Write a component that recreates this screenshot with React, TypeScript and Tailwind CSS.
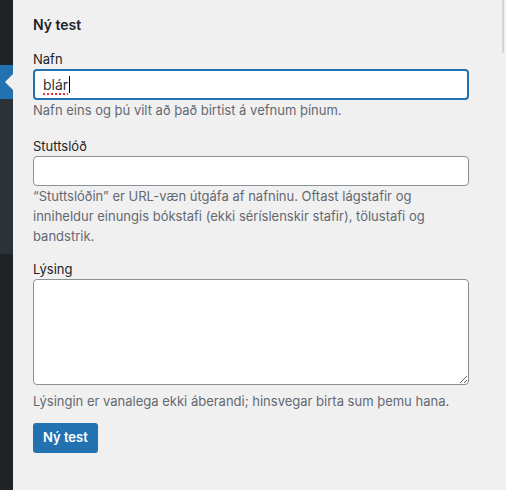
const FONT = "font-['Inter','Liberation_Sans',Arial,sans-serif]";

function Label({ children }: { children: React.ReactNode }) {
    return <div className="mb-px text-[13px] leading-[18px] text-[#1d2327]">{children}</div>;
}

function Help({ children, className = "" }: { children: React.ReactNode; className?: string }) {
    return <p className={`text-[13px] leading-[20px] text-[#646970] ${className}`}>{children}</p>;
}

export default function App() {
    return (
        <div className={`relative flex h-[490px] w-[506px] overflow-hidden bg-[#f0f0f1] ${FONT}`}>
            {/* admin menu strip */}
            <div className="flex w-[13px] flex-col">
                <div className="h-[65px] bg-[#1d2327]" />
                <div className="relative h-[34px] bg-[#2271b1]">
                    <div className="absolute right-0 top-[9px] h-0 w-0 border-y-[8px] border-r-[8px] border-y-transparent border-r-[#f0f0f1]" />
                </div>
                <div className="h-[155px] bg-[#2c3338]" />
                <div className="flex-1 bg-[#1d2327]" />
            </div>

            <form className="w-[436px] pl-[20px] pt-[15px] box-content" onSubmit={(e) => e.preventDefault()}>
                <h2 className="text-[14px] font-semibold leading-[20px] text-[#1d2327]">Ný test</h2>

                <div className="mt-[15px]">
                    <Label>Nafn</Label>
                    <div className="flex h-[31px] w-[436px] items-center rounded-[4px] border-2 border-[#2271b1] bg-white px-[8px] text-[14px] text-[#2c3338]">
                        <span className="underline decoration-red-500 decoration-dotted decoration-2 underline-offset-[3px]">blár</span>
                        <span className="ml-px h-[17px] w-px bg-black" />
                    </div>
                    <Help>Nafn eins og þú vilt að það birtist á vefnum þínum.</Help>
                </div>

                <div className="mt-[17px]">
                    <Label>Stuttslóð</Label>
                    <input
                        type="text"
                        className="block h-[30px] w-[436px] rounded-[4px] border border-[#8c8f94] bg-white px-[8px] text-[14px] outline-none"
                    />
                    <Help>
                        “Stuttslóðin” er URL-væn útgáfa af nafninu. Oftast lágstafir og inniheldur einungis bókstafi
                        (ekki séríslenskir stafir), tölustafi og bandstrik.
                    </Help>
                </div>

                <div className="mt-[14px]">
                    <Label>Lýsing</Label>
                    <textarea className="block h-[106px] w-[436px] rounded-[4px] border border-[#8c8f94] bg-white px-[8px] text-[14px] outline-none" />
                    <Help className="mt-[6px]">Lýsingin er vanalega ekki áberandi; hinsvegar birta sum þemu hana.</Help>
                </div>

                <button
                    type="submit"
                    className="mt-[12px] h-[30px] rounded-[3px] bg-[#2271b1] px-[10px] text-[13px] font-semibold text-white"
                >
                    Ný test
                </button>
            </form>

            {/* scrollbar */}
            <div className="absolute right-[2px] top-0 h-[53px] w-[2px] rounded-b bg-[#d3d3d4]" />
        </div>
    );
}
